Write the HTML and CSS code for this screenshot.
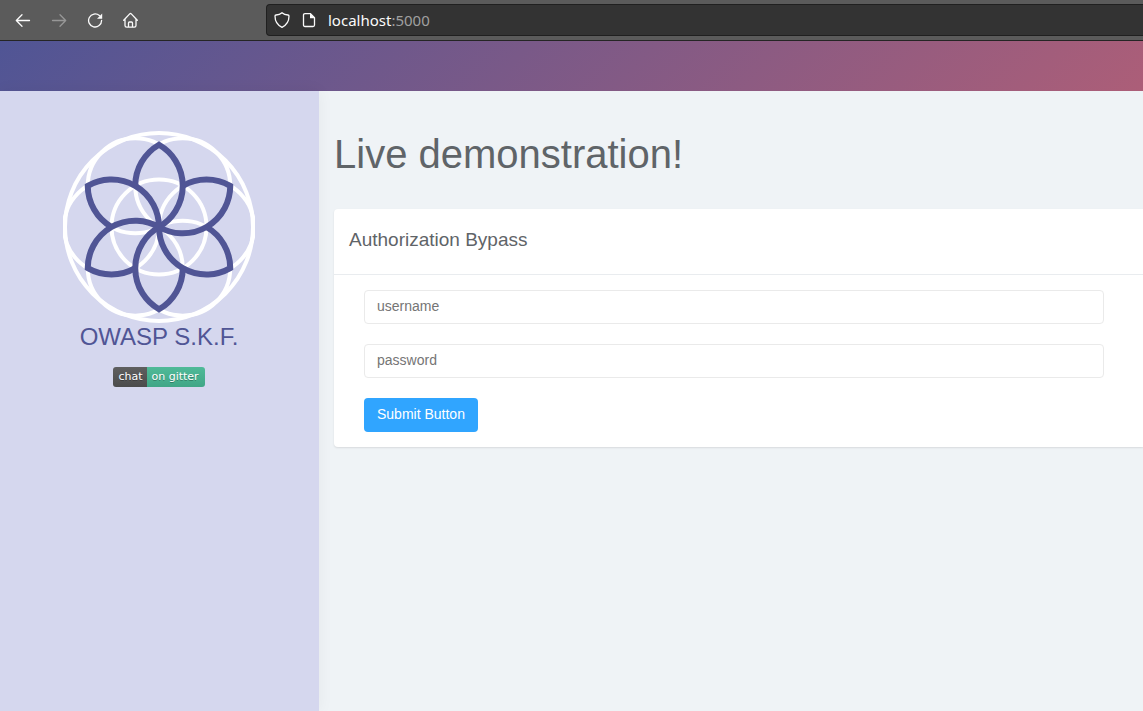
FILE: index.html
```html
<!DOCTYPE html>
<html lang="en">
<head>
<meta charset="utf-8">
<meta name="viewport" content="width=device-width, initial-scale=1">
<title>OWASP S.K.F.</title>
<link rel="stylesheet" href="styles.css">
</head>
<body>
<header class="toolbar">
  <nav class="nav-buttons" aria-label="Browser">
    <button class="nav-button" type="button" aria-label="Back">
      <svg viewBox="0 0 16 16"><path d="M14.500 8.500H1.500M7 2.800l-5.700 5.700 5.700 5.700"/></svg>
    </button>
    <button class="nav-button" type="button" aria-label="Forward" disabled>
      <svg viewBox="0 0 16 16"><path d="M1.500 8.500h13M9 2.800l5.700 5.700-5.700 5.700"/></svg>
    </button>
    <button class="nav-button" type="button" aria-label="Reload">
      <svg viewBox="0 0 16 16"><path d="M14.600 8.500a6.500 6.500 0 1 1-2.200-4.900"/><path class="solid" d="M15.200 1.500v5.200h-5.200z"/></svg>
    </button>
    <button class="nav-button" type="button" aria-label="Home">
      <svg viewBox="0 0 16 16"><path d="M.7 8.200L6.700 1.900q.8-.8 1.600 0L14.300 8.200M2 7.200v6.300q0 1.700 1.700 1.700h7.600q1.700 0 1.700-1.700V7.200M5.500 15v-4q0-1 1-1h2q1 0 1 1v4"/></svg>
    </button>
  </nav>
  <div class="address">
    <svg class="address-icon" viewBox="0 0 16 16"><path d="M8 .8c1.600 1.400 4 2.100 6 2.200q1 .1 1 1.100c0 5-1.700 8.800-7 11.200C2.700 12.900 1 9.100 1 4.100q0-1 1-1.100c2-.1 4.400-.8 6-2.200z"/></svg>
    <svg class="address-icon" viewBox="0 0 16 16"><path d="M4 1.600h5.500l4 4v7.400q0 1.500-1.500 1.500H4q-1.500 0-1.500-1.500V3.100q0-1.500 1.500-1.500z"/><path class="solid" d="M9 1.300v4.900h5z"/></svg>
    <span class="url">localhost<span class="port">:5000</span></span>
  </div>
</header>
<div class="banner"></div>
<div class="layout">
  <aside class="sidebar">
    <svg class="logo" viewBox="-96 -96 192 192" role="img" aria-label="Flower emblem">
      <g class="rings">
        <circle r="94"/>
        <circle r="47.500"/>
        <circle cx="47.500" r="47.500"/>
        <circle cx="23.750" cy="41.140" r="47.500"/>
        <circle cx="-23.750" cy="41.140" r="47.500"/>
        <circle cx="-47.500" r="47.500"/>
        <circle cx="-23.750" cy="-41.140" r="47.500"/>
        <circle cx="23.750" cy="-41.140" r="47.500"/>
      </g>
      <g class="petals">
        <path id="petal" d="M-23.750-41.140A47.500 47.500 0 0 1 0-82.270A47.500 47.500 0 0 1 0 0"/>
        <use href="#petal" transform="rotate(60)"/>
        <use href="#petal" transform="rotate(120)"/>
        <use href="#petal" transform="rotate(180)"/>
        <use href="#petal" transform="rotate(240)"/>
        <use href="#petal" transform="rotate(300)"/>
      </g>
    </svg>
    <div class="brand">OWASP S.K.F.</div>
    <a class="badge" href="#"><span class="badge-label">chat</span><span class="badge-value">on gitter</span></a>
  </aside>
  <main class="content">
    <h1 class="title">Live demonstration!</h1>
    <section class="card">
      <h2 class="card-title">Authorization Bypass</h2>
      <form class="form">
        <input class="field" type="text" placeholder="username" aria-label="username">
        <input class="field" type="password" placeholder="password" aria-label="password">
        <button class="submit" type="button">Submit Button</button>
      </form>
    </section>
  </main>
</div>
</body>
</html>
```
FILE: styles.css
```css
* { box-sizing: border-box; }

body {
  margin: 0;
  min-height: 100vh;
  display: flex;
  flex-direction: column;
  background: #eff3f6;
  color: #5f6468;
  font-family: "Liberation Sans", Arial, sans-serif;
  font-size: 14px;
}

svg { fill: none; }

.toolbar {
  display: flex;
  align-items: center;
  gap: 127px;
  height: 41px;
  padding-left: 15px;
  background: #5b5b5b;
  border-bottom: 1px solid #252525;
}
.nav-buttons { display: flex; gap: 20px; }
.nav-button {
  width: 16px;
  height: 16px;
  padding: 0;
  border: 0;
  background: none;
  color: #fbfbfb;
}
.nav-button:disabled { color: #979797; }
.nav-button svg, .address-icon {
  display: block;
  width: 16px;
  height: 16px;
  stroke: currentColor;
  stroke-width: 1.3;
  stroke-linecap: round;
  stroke-linejoin: round;
}
.nav-button .solid, .address-icon .solid { fill: currentColor; stroke: none; }

.address {
  flex: 1;
  display: flex;
  align-items: center;
  gap: 11px;
  height: 32px;
  padding-left: 7px;
  background: #333;
  border: 1px solid #202020;
  border-right: 0;
  border-radius: 4px 0 0 4px;
  color: #fbfbfb;
}
.url { font-family: "Noto Sans", sans-serif; font-size: 15px; }
.port { color: #a0a0a0; }

.banner {
  height: 50px;
  background: linear-gradient(135deg, #505595, #ac5e78);
}

.layout { flex: 1; display: flex; }

.sidebar {
  width: 319px;
  display: flex;
  flex-direction: column;
  align-items: center;
  padding: 40px 1px 0 0;
  background: #d5d7ee;
  box-shadow: 0 0 15px rgba(0, 0, 0, 0.05);
}
.logo { width: 192px; height: 192px; }
.rings { stroke: #fff; stroke-width: 4; }
.petals { stroke: #505595; stroke-width: 6; }
.brand {
  color: #505595;
  font-size: 24px;
  line-height: 28px;
}
.badge {
  display: flex;
  margin-top: 16px;
  border-radius: 3px;
  overflow: hidden;
  color: #fff;
  font-family: "DejaVu Sans", Verdana, sans-serif;
  font-size: 11px;
  line-height: 20px;
  text-decoration: none;
  text-shadow: 0 1px 0 rgba(1, 1, 1, 0.3);
}
.badge-label {
  padding: 0 5px;
  background: linear-gradient(#5f5f5f, #4b4b4b);
}
.badge-value {
  padding: 0 6px 0 4px;
  background: linear-gradient(#50ba98, #40a686);
}

.content {
  flex: 1;
  min-width: 0;
  padding: 40px 0 0 15px;
}
.title {
  margin: 0 0 32px;
  font-size: 40px;
  font-weight: 400;
  line-height: 46px;
}
.card {
  background: #fff;
  border-radius: 4px 0 0 4px;
  box-shadow: 0 1px 2px rgba(0, 0, 0, 0.1);
}
.card-title {
  margin: 0;
  padding: 20px 15px 23px;
  border-bottom: 1px solid #e9ecef;
  font-size: 19px;
  font-weight: 400;
  line-height: 22px;
}
.form {
  display: flex;
  flex-direction: column;
  align-items: flex-start;
  gap: 20px;
  padding: 15px 39px 15px 30px;
}
.field {
  width: 100%;
  height: 34px;
  padding: 0 12px 2px;
  border: 1px solid #eaeaea;
  border-radius: 4px;
  background: #fff;
  color: #555;
  font: inherit;
}
.field::placeholder { color: #757575; }
.submit {
  height: 34px;
  padding: 0 13px 2px;
  border: 0;
  border-radius: 4px;
  background: #30a5ff;
  color: #fff;
  font: inherit;
}
```
